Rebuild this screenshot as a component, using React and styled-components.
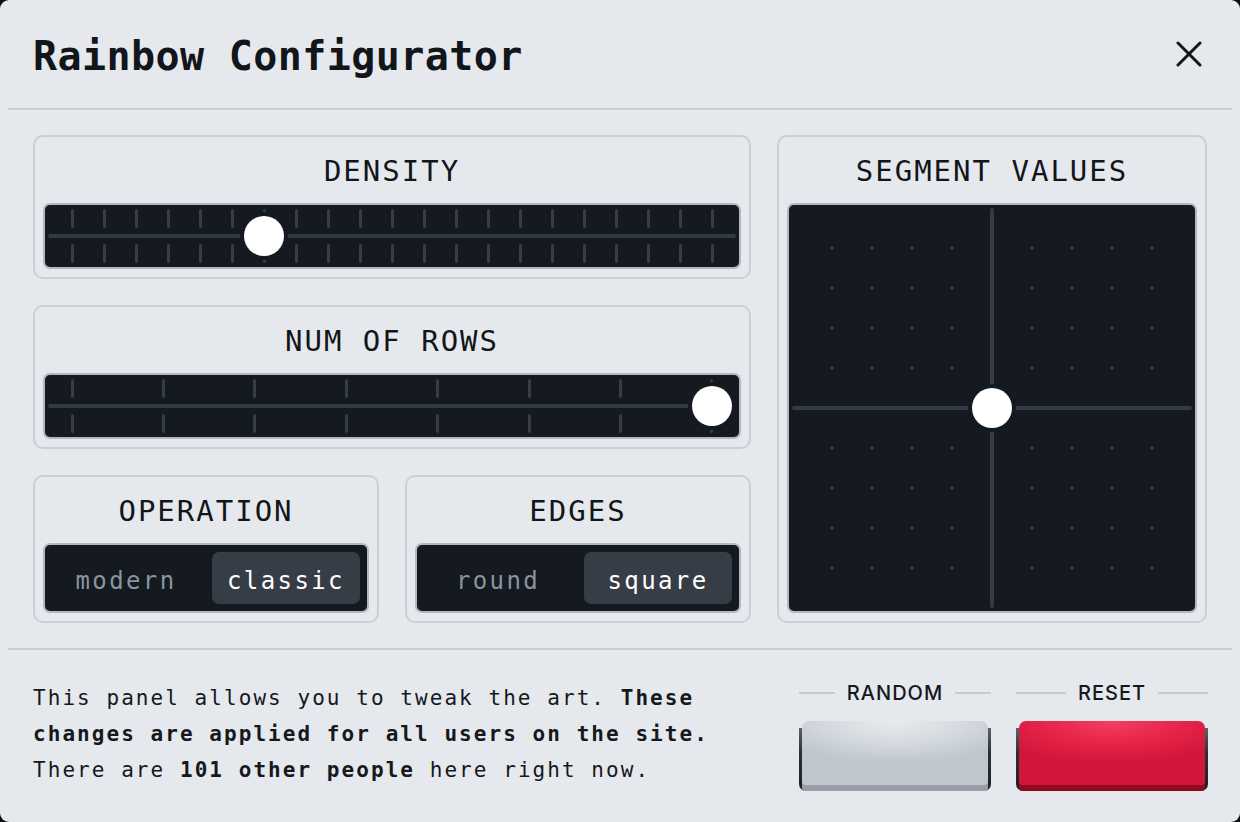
import React from "react";
import styled, { createGlobalStyle } from "styled-components";

const MONO = `"DejaVu Sans Mono", "Liberation Mono", monospace`;

const GlobalStyle = createGlobalStyle`
  html, body {
    margin: 0;
    padding: 0;
    background: #0d0f12;
  }
  * {
    box-sizing: border-box;
  }
`;

// Dialog shell
const Dialog = styled.div`
  width: 1240px;
  height: 822px;
  background: #e5e9ed;
  border-radius: 9px;
  display: flex;
  flex-direction: column;
  overflow: hidden;
  font-family: ${MONO};
  color: #121519;
`;

const Header = styled.header`
  height: 108px;
  display: flex;
  align-items: center;
  justify-content: space-between;
  padding: 0 38px 0 33px;
`;

const Title = styled.h1`
  margin: 0;
  font-size: 40px;
  font-weight: 700;
  letter-spacing: 0.4px;
  line-height: 1;
  padding-top: 4px;
`;

const CloseButton = styled.button`
  border: none;
  background: none;
  padding: 0;
  width: 26px;
  height: 26px;
  display: flex;
  cursor: pointer;
`;

const Rule = styled.div`
  height: 2px;
  margin: 0 8px;
  background: #c9cdd2;
  flex-shrink: 0;
`;

const Main = styled.main`
  display: grid;
  grid-template-columns: 718px 430px;
  grid-template-rows: 144px 144px 148px;
  gap: 26px;
  padding: 25px 33px 25px 33px;
`;

const Pair = styled.div`
  display: grid;
  grid-template-columns: 1fr 1fr;
  gap: 26px;
  grid-column: 1;
  grid-row: 3;
`;

const Card = styled.section`
  border: 2px solid #cbcfd5;
  border-radius: 10px;
  padding: 0 8px 8px;
  display: flex;
  flex-direction: column;
  grid-row: ${(p) => p.$span || "auto"};
  grid-column: ${(p) => p.$col || "auto"};
`;

const Label = styled.div`
  height: 66px;
  display: flex;
  align-items: center;
  justify-content: center;
  font-size: 29px;
  letter-spacing: 2px;
  padding-top: 2px;
`;

// Slider
const Track = styled.div`
  position: relative;
  height: 66px;
  background: #151920;
  border: 2px solid #b3b8bf;
  border-radius: 7px;
  padding: 4px 3px;
  display: flex;
  flex-direction: column;
  gap: 6px;
`;

const TickRow = styled.div`
  height: 19px;
  display: flex;
  justify-content: space-between;
  padding: 0 22.5px;
`;

const Tick = styled.span`
  width: 3px;
  height: 100%;
  border-radius: 2px;
  background: #363d46;
`;

const Line = styled.div`
  height: 4px;
  border-radius: 2px;
  background: #333a43;
`;

const Knob = styled.div`
  position: absolute;
  width: 40px;
  height: 40px;
  border-radius: 50%;
  background: #ffffff;
  box-shadow: 0 0 0 4px #151920;
  transform: translate(-50%, -50%);
  top: 50%;
`;

const Slider = ({ ticks, value }) => {
  const row = (
    <TickRow>
      {Array.from({ length: ticks }).map((_, i) => (
        <Tick key={i} />
      ))}
    </TickRow>
  );
  return (
    <Track>
      {row}
      <Line />
      {row}
      <Knob style={{ left: `calc(27px + (100% - 54px) * ${value})` }} />
    </Track>
  );
};

// Toggle
const Switch = styled.div`
  height: 70px;
  background: #151920;
  border: 2px solid #b3b8bf;
  border-radius: 7px;
  padding: 7px;
  display: grid;
  grid-template-columns: 1fr 1fr;
  gap: 12px;
`;

const Option = styled.button`
  border: none;
  border-radius: 7px;
  font-family: ${MONO};
  font-size: 24px;
  letter-spacing: 2.4px;
  padding: 5px 0 0;
  cursor: pointer;
  background: ${(p) => (p.$active ? "#363d46" : "transparent")};
  color: ${(p) => (p.$active ? "#ffffff" : "#8a94a0")};
`;

// Segment pad
const Pad = styled.div`
  position: relative;
  width: 410px;
  height: 410px;
  background: #151920;
  border: 2px solid #b3b8bf;
  border-radius: 7px;
`;

const PadGrid = styled.svg`
  display: block;
`;

const dots = [43, 83, 123, 163, 243, 283, 323, 363];

// Footer
const Footer = styled.footer`
  flex: 1;
  display: flex;
  align-items: center;
  justify-content: space-between;
  padding: 0 32px 4px 33px;
`;

const Blurb = styled.p`
  margin: 0;
  font-size: 21px;
  line-height: 36px;
  letter-spacing: 2.05px;
  color: #15181d;

  b {
    font-weight: 700;
  }
`;

const Actions = styled.div`
  display: flex;
  gap: 25px;
  margin-top: 4px;
`;

const ActionCol = styled.div`
  width: 192px;
  display: flex;
  flex-direction: column;
  gap: 16px;
`;

const ActionLabel = styled.div`
  display: flex;
  align-items: center;
  gap: 12px;
  font-family: Inter, "Liberation Sans", sans-serif;
  font-size: 20px;
  font-weight: 500;
  letter-spacing: 1px;
  line-height: 24px;
  color: #15181d;

  &::before,
  &::after {
    content: "";
    flex: 1;
    height: 2px;
    background: #c8ccd1;
  }
`;

const KeyCap = styled.button`
  height: 70px;
  border: none;
  padding: 0 3px;
  border-radius: 7px;
  display: flex;
  cursor: pointer;
  background: linear-gradient(
    to bottom,
    transparent 0 7px,
    #5d636b 7px,
    #2c3137 45%,
    #1c2026 100%
  );
`;

const KeyFace = styled.span`
  flex: 1;
  border-radius: 7px 7px 4px 4px;
  background: ${(p) =>
    p.$tone === "red"
      ? "radial-gradient(ellipse 70% 60% at 50% 0%, #f43f63 0%, #e52448 55%, #d2163b 100%)"
      : "radial-gradient(ellipse 70% 60% at 50% 0%, #e8ebee 0%, #d4d9df 55%, #bfc6ce 100%)"};
  box-shadow: inset 0 -6px 0
    ${(p) => (p.$tone === "red" ? "#93091f" : "#979ea8")};
`;

export default function App() {
  return (
    <>
      <GlobalStyle />
      <Dialog>
        <Header>
          <Title>Rainbow Configurator</Title>
          <CloseButton aria-label="Close">
            <svg width="26" height="26" viewBox="0 0 26 26">
              <path
                d="M2 2 24 24 M24 2 2 24"
                stroke="#111418"
                strokeWidth="3"
                strokeLinecap="round"
              />
            </svg>
          </CloseButton>
        </Header>
        <Rule />
        <Main>
          <Card $col="1" $span="1">
            <Label>DENSITY</Label>
            <Slider ticks={21} value={0.3} />
          </Card>
          <Card $col="2" $span="1 / span 3">
            <Label>SEGMENT VALUES</Label>
            <Pad>
              <PadGrid width="406" height="406" viewBox="0 0 406 406">
                {dots.map((x) =>
                  dots.map((y) => (
                    <circle key={`${x}-${y}`} cx={x} cy={y} r="1.7" fill="#3a414b" />
                  ))
                )}
                <path
                  d="M203 5 V401 M5 203 H401"
                  stroke="#343b44"
                  strokeWidth="4"
                  strokeLinecap="round"
                />
              </PadGrid>
              <Knob style={{ left: "50%" }} />
            </Pad>
          </Card>
          <Card $col="1" $span="2">
            <Label>NUM OF ROWS</Label>
            <Slider ticks={8} value={1} />
          </Card>
          <Pair>
            <Card>
              <Label>OPERATION</Label>
              <Switch>
                <Option>modern</Option>
                <Option $active>classic</Option>
              </Switch>
            </Card>
            <Card>
              <Label>EDGES</Label>
              <Switch>
                <Option>round</Option>
                <Option $active>square</Option>
              </Switch>
            </Card>
          </Pair>
        </Main>
        <Rule />
        <Footer>
          <Blurb>
            This panel allows you to tweak the art. <b>These</b>
            <br />
            <b>changes are applied for all users on the site.</b>
            <br />
            There are <b>101 other people</b> here right now.
          </Blurb>
          <Actions>
            <ActionCol>
              <ActionLabel>RANDOM</ActionLabel>
              <KeyCap aria-label="Random">
                <KeyFace $tone="grey" />
              </KeyCap>
            </ActionCol>
            <ActionCol>
              <ActionLabel>RESET</ActionLabel>
              <KeyCap aria-label="Reset">
                <KeyFace $tone="red" />
              </KeyCap>
            </ActionCol>
          </Actions>
        </Footer>
      </Dialog>
    </>
  );
}
